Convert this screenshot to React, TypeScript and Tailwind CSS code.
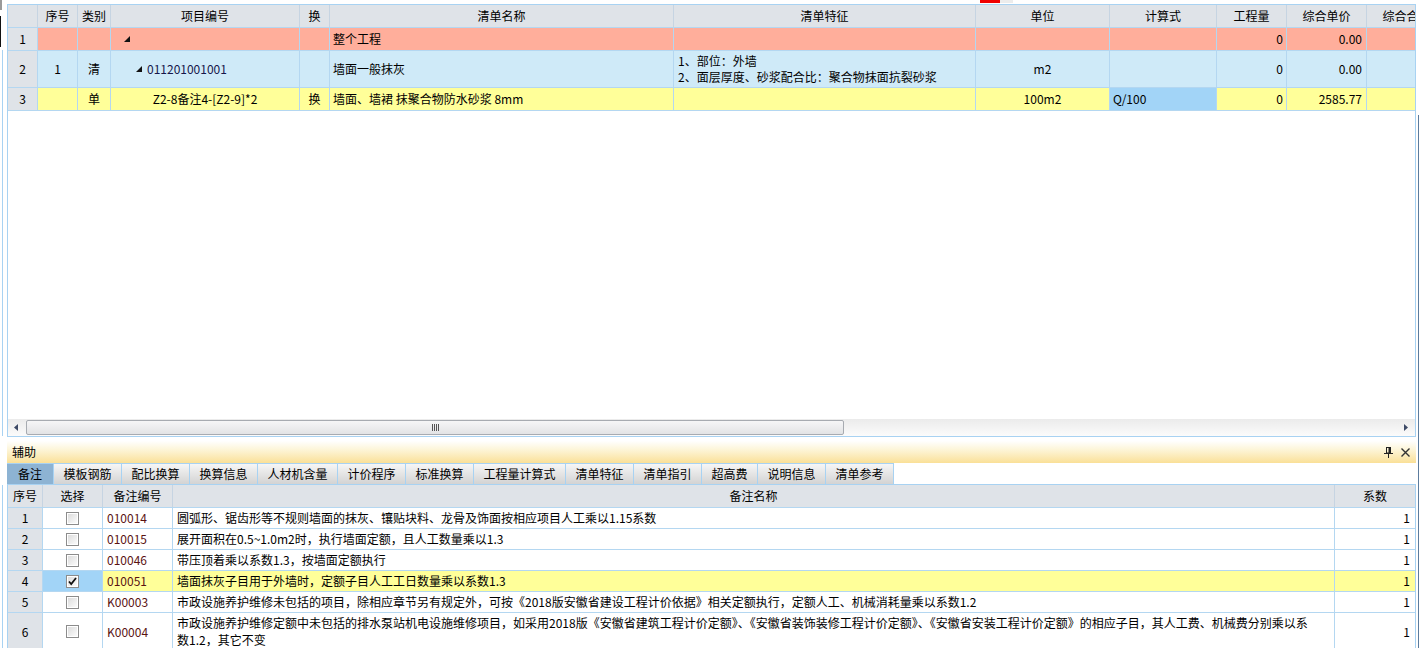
import React from 'react';

const TW = [
  'w-[30px]',
  'w-[40px]',
  'w-[33px]',
  'w-[189px]',
  'w-[30px]',
  'w-[344px]',
  'w-[302px]',
  'w-[134px]',
  'w-[107px]',
  'w-[70px]',
  'w-[80px]',
  'w-[80px]',
];

const BW = ['w-[35px]', 'w-[60px]', 'w-[70px]', 'w-[1162px]', 'w-[80px]'];

function Tri() {
  return (
    <svg width="6" height="6" viewBox="0 0 6 6" className="shrink-0">
      <polygon points="6,0 6,6 0,6" fill="#111" />
    </svg>
  );
}

function Cell({
  w,
  className = '',
  children,
}: {
  w: string;
  className?: string;
  children?: React.ReactNode;
}) {
  return (
    <div
      className={`${w} shrink-0 h-full border-r border-[#b4d7f1] flex items-center overflow-hidden whitespace-nowrap ${className}`}
    >
      {children}
    </div>
  );
}

function CheckBox({ checked }: { checked?: boolean }) {
  return (
    <svg width="13" height="13" viewBox="0 0 13 13">
      <defs>
        <linearGradient id={checked ? 'cbg1' : 'cbg0'} x1="0" y1="0" x2="1" y2="1">
          <stop offset="0" stopColor="#dcdcdc" />
          <stop offset="1" stopColor="#fbfbfb" />
        </linearGradient>
      </defs>
      <rect x="0.5" y="0.5" width="12" height="12" fill="#fff" stroke="#8c8c8c" />
      <rect x="2" y="2" width="9" height="9" fill={`url(#${checked ? 'cbg1' : 'cbg0'})`} />
      {checked && (
        <path d="M3 6.5 L5.2 9 L10 3" fill="none" stroke="#111" strokeWidth="1.8" />
      )}
    </svg>
  );
}

const remarks = [
  { n: '1', code: '010014', text: '圆弧形、锯齿形等不规则墙面的抹灰、镶贴块料、龙骨及饰面按相应项目人工乘以1.15系数' },
  { n: '2', code: '010015', text: '展开面积在0.5~1.0m2时，执行墙面定额，且人工数量乘以1.3' },
  { n: '3', code: '010046', text: '带压顶着乘以系数1.3，按墙面定额执行' },
  { n: '4', code: '010051', text: '墙面抹灰子目用于外墙时，定额子目人工工日数量乘以系数1.3', sel: true },
  {
    n: '5',
    code: 'K00003',
    text: '市政设施养护维修未包括的项目，除相应章节另有规定外，可按《2018版安徽省建设工程计价依据》相关定额执行，定额人工、机械消耗量乘以系数1.2',
  },
];

const tabs = [
  { t: '备注', w: 'w-[47px]', active: true },
  { t: '模板钢筋', w: 'w-[68px]' },
  { t: '配比换算', w: 'w-[68px]' },
  { t: '换算信息', w: 'w-[68px]' },
  { t: '人材机含量', w: 'w-[80px]' },
  { t: '计价程序', w: 'w-[68px]' },
  { t: '标准换算', w: 'w-[68px]' },
  { t: '工程量计算式', w: 'w-[92px]' },
  { t: '清单特征', w: 'w-[68px]' },
  { t: '清单指引', w: 'w-[68px]' },
  { t: '超高费', w: 'w-[56px]' },
  { t: '说明信息', w: 'w-[68px]' },
  { t: '清单参考', w: 'w-[68px]' },
];

const headers = ['', '序号', '类别', '项目编号', '换', '清单名称', '清单特征', '单位', '计算式', '工程量', '综合单价', '综合合价'];

export default function App() {
  return (
    <div className="relative w-[1420px] h-[648px] overflow-hidden bg-white text-[12px] text-black font-['Noto_Sans_CJK_SC',sans-serif]">
      {/* decorations from surrounding windows */}
      <div className="absolute left-0 top-0 w-[2px] h-[10px] bg-[#9a9a9a]" />
      <div className="absolute left-0 top-[16px] w-[1px] h-[31px] bg-[#111]" />
      <div className="absolute left-[2px] top-[50px] w-[1px] h-[386px] bg-[#a8d2f2]" />
      <div className="absolute left-[2px] top-[485px] w-[1px] h-[163px] bg-[#a8d2f2]" />
      <div className="absolute left-[1418px] top-[115px] w-[1px] h-[533px] bg-[#5c7c9e]" />

      {/* top strip */}
      <div className="relative h-[4px]">
        <div className="absolute left-[980px] top-0 w-[20px] h-[3px] bg-[#f00000]" />
        <div className="absolute left-[1000px] top-0 w-[13px] h-[3px] bg-[#ececec]" />
      </div>

      {/* main grid */}
      <div className="ml-[7px] w-[1409px] h-[433px] border border-[#a8d2f2] flex flex-col overflow-hidden">
        {/* header */}
        <div className="flex h-[23px] shrink-0 border-b border-[#b4d7f1] bg-[#dfe3e8]">
          {headers.map((h, i) => (
            <div
              key={i}
              className={`${TW[i]} shrink-0 h-full border-r border-[#c6d4e2] flex items-center justify-center overflow-hidden whitespace-nowrap`}
            >
              {h}
            </div>
          ))}
        </div>

        {/* row 1 */}
        <div className="flex h-[23px] shrink-0 border-b border-[#b4d7f1] bg-[#ffae9b]">
          <Cell w={TW[0]} className="justify-center bg-[#dfe3e8]">1</Cell>
          <Cell w={TW[1]} />
          <Cell w={TW[2]} />
          <Cell w={TW[3]} className="pl-[13px]">
            <Tri />
          </Cell>
          <Cell w={TW[4]} />
          <Cell w={TW[5]} className="pl-[3px]">整个工程</Cell>
          <Cell w={TW[6]} />
          <Cell w={TW[7]} />
          <Cell w={TW[8]} />
          <Cell w={TW[9]} className="justify-end pr-[3px]">0</Cell>
          <Cell w={TW[10]} className="justify-end pr-[4px]">0.00</Cell>
          <Cell w={TW[11]} />
        </div>

        {/* row 2 */}
        <div className="flex h-[37px] shrink-0 border-b border-[#b4d7f1] bg-[#cfeaf8]">
          <Cell w={TW[0]} className="justify-center bg-[#dfe3e8]">2</Cell>
          <Cell w={TW[1]} className="justify-center">1</Cell>
          <Cell w={TW[2]} className="justify-center">清</Cell>
          <Cell w={TW[3]} className="pl-[25px] gap-[5px]">
            <Tri />
            <span className="text-[#16164a]">011201001001</span>
          </Cell>
          <Cell w={TW[4]} />
          <Cell w={TW[5]} className="pl-[3px]">墙面一般抹灰</Cell>
          <Cell w={TW[6]} className="pl-[4px]">
            <div className="leading-[16px]">
              <div>1、部位：外墙</div>
              <div>2、面层厚度、砂浆配合比：聚合物抹面抗裂砂浆</div>
            </div>
          </Cell>
          <Cell w={TW[7]} className="justify-center">m2</Cell>
          <Cell w={TW[8]} />
          <Cell w={TW[9]} className="justify-end pr-[3px]">0</Cell>
          <Cell w={TW[10]} className="justify-end pr-[4px]">0.00</Cell>
          <Cell w={TW[11]} />
        </div>

        {/* row 3 */}
        <div className="flex h-[23px] shrink-0 border-b border-[#b4d7f1] bg-[#ffff99]">
          <Cell w={TW[0]} className="justify-center bg-[#dfe3e8]">3</Cell>
          <Cell w={TW[1]} />
          <Cell w={TW[2]} className="justify-center">单</Cell>
          <Cell w={TW[3]} className="justify-center">Z2-8备注4-[Z2-9]*2</Cell>
          <Cell w={TW[4]} className="justify-center">换</Cell>
          <Cell w={TW[5]} className="pl-[3px]">墙面、墙裙 抹聚合物防水砂浆 8mm</Cell>
          <Cell w={TW[6]} />
          <Cell w={TW[7]} className="justify-center">100m2</Cell>
          <Cell w={TW[8]} className="pl-[3px] bg-[#a2d4f7]">Q/100</Cell>
          <Cell w={TW[9]} className="justify-end pr-[3px]">0</Cell>
          <Cell w={TW[10]} className="justify-end pr-[4px]">2585.77</Cell>
          <Cell w={TW[11]} />
        </div>

        <div className="flex-1" />

        {/* horizontal scrollbar */}
        <div className="h-[17px] shrink-0 flex items-center bg-linear-to-b from-[#ebebeb] to-[#fbfbfb]">
          <svg width="4" height="7" viewBox="0 0 4 7" className="ml-[6px] shrink-0">
            <polygon points="4,0 4,7 0,3.5" fill="#3d4a66" />
          </svg>
          <div className="ml-[8px] w-[818px] h-[15px] shrink-0 border border-[#a7abb1] rounded-[2px] bg-linear-to-b from-[#f6f6f7] to-[#e2e3e5] flex items-center justify-center">
            <div className="flex gap-[1px]">
              <div className="w-[1px] h-[7px] bg-[#555]" />
              <div className="w-[1px] h-[7px] bg-[#555]" />
              <div className="w-[1px] h-[7px] bg-[#555]" />
              <div className="w-[1px] h-[7px] bg-[#555]" />
            </div>
          </div>
          <svg width="4" height="7" viewBox="0 0 4 7" className="ml-auto mr-[7px] shrink-0">
            <polygon points="0,0 0,7 4,3.5" fill="#3d4a66" />
          </svg>
        </div>
      </div>

      {/* auxiliary panel */}
      <div className="ml-[7px] w-[1409px] flex flex-col">
        <div className="h-[26px] flex items-center pl-[5px] pr-[6px] pt-[4px] bg-linear-to-b from-[#ffffff] from-[15%] via-[#fdf6dc] via-[45%] to-[#fae097]">
          <span>辅助</span>
          <div className="ml-auto flex items-center gap-[8px]">
            <svg width="9" height="11" viewBox="0 0 9 11">
              <rect x="2.5" y="0.5" width="4" height="5.5" fill="none" stroke="#222" />
              <rect x="4.5" y="0.5" width="2" height="5.5" fill="#222" />
              <line x1="0" y1="6.5" x2="9" y2="6.5" stroke="#222" />
              <line x1="4.5" y1="6.5" x2="4.5" y2="11" stroke="#222" />
            </svg>
            <svg width="9" height="9" viewBox="0 0 9 9">
              <path d="M0.5 0.5 L8.5 8.5 M8.5 0.5 L0.5 8.5" stroke="#333" strokeWidth="1.4" />
            </svg>
          </div>
        </div>

        {/* tabs */}
        <div className="h-[21px] flex">
          {tabs.map((t) => (
            <div
              key={t.t}
              className={`${t.w} shrink-0 h-full border-t border-r border-[#a8d2f2] flex items-center justify-center whitespace-nowrap ${
                t.active ? 'bg-[#8db3d3]' : 'bg-linear-to-b from-[#f6f6f6] to-[#d3d3d3]'
              }`}
            >
              {t.t}
            </div>
          ))}
        </div>

        {/* remarks table */}
        <div className="border-t border-l border-r border-[#a8d2f2]">
          <div className="flex h-[23px] border-b border-[#b4d7f1] bg-[#dfe3e8]">
            <div className={`${BW[0]} shrink-0 border-r border-[#c6d4e2] flex items-center justify-center`}>序号</div>
            <div className={`${BW[1]} shrink-0 border-r border-[#c6d4e2] flex items-center justify-center`}>选择</div>
            <div className={`${BW[2]} shrink-0 border-r border-[#c6d4e2] flex items-center justify-center`}>备注编号</div>
            <div className={`${BW[3]} shrink-0 border-r border-[#c6d4e2] flex items-center justify-center`}>备注名称</div>
            <div className={`${BW[4]} shrink-0 flex items-center justify-center`}>系数</div>
          </div>

          {remarks.map((r) => (
            <div
              key={r.n}
              className={`flex h-[21px] border-b border-[#b4d7f1] ${r.sel ? 'bg-[#ffff99]' : 'bg-white'}`}
            >
              <Cell w={BW[0]} className="justify-center bg-[#dfe3e8]">{r.n}</Cell>
              <Cell w={BW[1]} className={`justify-center ${r.sel ? 'bg-[#a2d4f7]' : ''}`}>
                <CheckBox checked={r.sel} />
              </Cell>
              <Cell w={BW[2]} className="pl-[4px] text-[#5a1212]">{r.code}</Cell>
              <Cell w={BW[3]} className="pl-[4px]">{r.text}</Cell>
              <div className={`${BW[4]} shrink-0 h-full flex items-center justify-end pr-[5px]`}>1</div>
            </div>
          ))}

          <div className="flex h-[38px] border-b border-[#b4d7f1] bg-white">
            <Cell w={BW[0]} className="justify-center bg-[#dfe3e8]">6</Cell>
            <Cell w={BW[1]} className="justify-center">
              <CheckBox />
            </Cell>
            <Cell w={BW[2]} className="pl-[4px] text-[#5a1212]">K00004</Cell>
            <Cell w={BW[3]} className="pl-[4px] items-start pt-[1px]">
              <div className="leading-[17px]">
                <div>
                  市政设施养护维修定额中未包括的排水泵站机电设施维修项目，如采用2018版《安徽省建筑工程计价定额》、《安徽省装饰装修工程计价定额》、《安徽省安装工程计价定额》的相应子目，其人工费、机械费分别乘以系
                </div>
                <div>数1.2，其它不变</div>
              </div>
            </Cell>
            <div className={`${BW[4]} shrink-0 h-full flex items-center justify-end pr-[5px]`}>1</div>
          </div>
        </div>
      </div>
    </div>
  );
}
